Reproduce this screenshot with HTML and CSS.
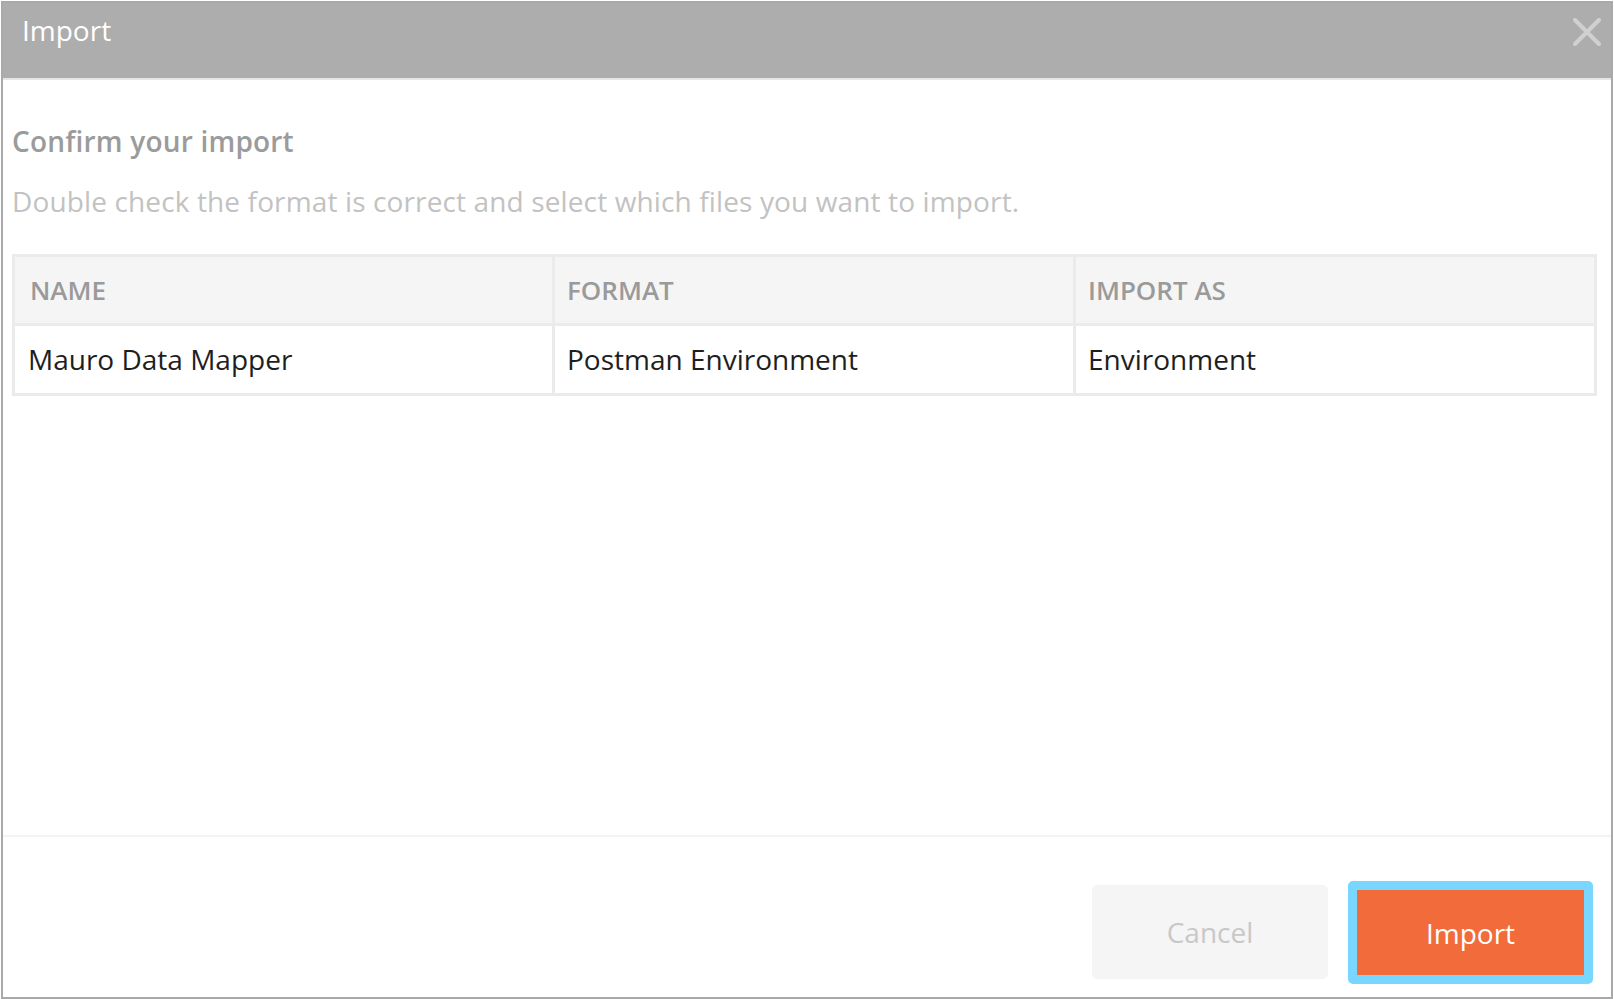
FILE: index.html
```
<!DOCTYPE html>
<html lang="en">
<head>
<meta charset="utf-8">
<title>Import</title>
<link rel="stylesheet" href="styles.css">
</head>
<body>
<div class="modal">
  <div class="modal-header">
    <div class="modal-title">Import</div>
    <button class="close" aria-label="Close">
      <svg width="28" height="28" viewBox="0 0 28 28"><path d="M2 2 L26 26 M26 2 L2 26" stroke="#d0d0d0" stroke-width="4" stroke-linecap="round" fill="none"/></svg>
    </button>
  </div>
  <div class="modal-body">
    <h2 class="confirm-title">Confirm your import</h2>
    <p class="confirm-desc">Double check the format is correct and select which files you want to import.</p>
    <table class="import-table">
      <colgroup>
        <col class="col-name">
        <col class="col-format">
        <col class="col-as">
      </colgroup>
      <thead>
        <tr><th>NAME</th><th>FORMAT</th><th>IMPORT AS</th></tr>
      </thead>
      <tbody>
        <tr><td>Mauro Data Mapper</td><td>Postman Environment</td><td>Environment</td></tr>
      </tbody>
    </table>
  </div>
  <div class="modal-footer">
    <button class="btn btn-cancel">Cancel</button>
    <button class="btn btn-import">Import</button>
  </div>
</div>
</body>
</html>
```
FILE: styles.css
```
html, body {
  margin: 0;
  padding: 0;
  background: #ffffff;
}
body {
  font-family: "Open Sans", "Noto Sans", sans-serif;
}
.modal {
  box-sizing: border-box;
  margin: 1px 1px 0 1px;
  height: 998px;
  border: 2px solid #a9a9a9;
  display: flex;
  flex-direction: column;
  background: #ffffff;
}
.modal-header {
  flex: none;
  box-sizing: border-box;
  height: 77px;
  background: #adadad;
  border-bottom: 2px solid #e6e6e6;
  display: flex;
  justify-content: space-between;
  align-items: flex-start;
  padding: 8px 10px 0 19px;
}
.modal-title {
  color: #ffffff;
  font-size: 28px;
  line-height: 38px;
}
.close {
  border: 0;
  background: transparent;
  padding: 0;
  margin-top: 7px;
  width: 28px;
  height: 28px;
  display: block;
}
.close svg { display: block; }
.modal-body {
  flex: 1;
  padding: 42px 14px 0 9px;
}
.confirm-title {
  margin: 0;
  font-size: 28px;
  font-weight: 600;
  line-height: 38px;
  letter-spacing: 0.2px;
  color: #9b9b9b;
}
.confirm-desc {
  margin: 24px 0 0 0;
  font-size: 28px;
  line-height: 35px;
  letter-spacing: 0.13px;
  color: #c2c2c2;
}
.import-table {
  margin-top: 35px;
  width: 100%;
  border-collapse: collapse;
  table-layout: fixed;
  border: 3px solid #ebebeb;
}
.col-name { width: 540px; }
.col-format { width: 521px; }
.import-table th,
.import-table td {
  border: 3px solid #ebebeb;
  text-align: left;
  padding: 0 0 0 12px;
}
.import-table th {
  height: 66px;
  background: #f5f5f5;
  font-size: 26px;
  font-weight: 600;
  color: #9a9a9a;
}
.import-table th:first-child { padding-left: 15px; }
.import-table td:first-child { padding-left: 13px; }
.import-table td {
  height: 65px;
  padding-bottom: 2px;
  font-size: 28px;
  color: #1e1e1e;
}
.modal-footer {
  flex: none;
  height: 162px;
  box-sizing: border-box;
  border-top: 2px solid #f3f3f3;
  display: flex;
  justify-content: flex-end;
  align-items: flex-start;
  gap: 20px;
  padding: 44px 18px 0 0;
}
.btn {
  font-family: "Open Sans", "Noto Sans", sans-serif;
  font-size: 28px;
  cursor: pointer;
}
.btn-cancel {
  margin-top: 4px;
  width: 236px;
  height: 94px;
  border: 0;
  border-radius: 5px;
  background: #f5f5f5;
  color: #c8c8c8;
}
.btn-import {
  width: 245px;
  height: 103px;
  border: 9px solid #78d6ff;
  border-radius: 5px;
  background: #f26b3a;
  color: #ffffff;
}
```
